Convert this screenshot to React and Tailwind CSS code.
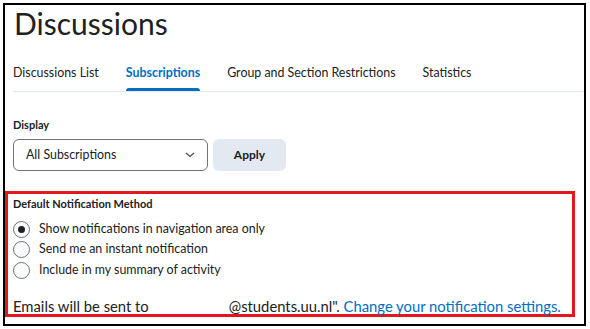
import React from "react";

function Radio({ checked, label }) {
  return (
    <div className="flex items-center h-[20.5px]">
      <span className="w-[17px] h-[17px] rounded-full border border-[#6e7477] bg-[#f9fbff] flex items-center justify-center">
        {checked && <span className="w-[7px] h-[7px] rounded-full bg-[#202122]" />}
      </span>
      <span className="ml-[9px] text-[12.4px] text-[#202122]">{label}</span>
    </div>
  );
}

export default function App() {
  const tabs = ["Discussions List", "Subscriptions", "Group and Section Restrictions", "Statistics"];

  return (
    <div
      className="w-[590px] h-[329px] bg-white p-[3px]"
      style={{ fontFamily: "Lato, 'Noto Sans', sans-serif" }}
    >
      <div className="h-[323px] w-[583px] border-2 border-black flex flex-col">
        <h1 className="pl-[9px] text-[30px] leading-[37px] text-[#202122] font-normal">
          Discussions
        </h1>

        <div className="ml-[8px] mt-[17px] flex gap-[27px] border-b border-[#e3e9f1] h-[33px]">
          {tabs.map((t, i) => (
            <div
              key={t}
              className={
                "relative pt-[5px] text-[12.4px] " +
                (i === 1 ? "text-[#006fbf] font-bold" : "text-[#202122]")
              }
            >
              {t}
              {i === 1 && (
                <span className="absolute left-0 right-0 bottom-0 h-[3px] bg-[#006fbf] rounded-t-sm" />
              )}
            </div>
          ))}
        </div>

        <div className="pl-[8px] mt-[26px]">
          <div className="text-[11px] font-bold text-[#202122] leading-[14px]">Display</div>
          <div className="flex gap-[5px] mt-[7px]">
            <div className="w-[195px] h-[32px] rounded-md border border-[#6e7477] flex items-center justify-between pl-[12px] pr-[12px]">
              <span className="text-[12.4px] text-[#202122]">All Subscriptions</span>
              <svg width="10" height="6" viewBox="0 0 10 6" fill="none">
                <path d="M1 1l4 3.5L9 1" stroke="#494c4e" strokeWidth="1.3" />
              </svg>
            </div>
            <button className="w-[73px] h-[32px] rounded-md bg-[#e3e9f1] text-[12px] font-bold text-[#202122]">
              Apply
            </button>
          </div>
        </div>

        <div className="mt-[20px] w-[570px] h-[126px] border-[3px] border-[#e3171f] pl-[5px]">
          <div className="mt-[3px] text-[11px] font-bold text-[#202122] leading-[14px]">
            Default Notification Method
          </div>
          <div className="mt-[8px] flex flex-col">
            <Radio checked label="Show notifications in navigation area only" />
            <Radio label="Send me an instant notification" />
            <Radio label="Include in my summary of activity" />
          </div>
          <div className="mt-[16px] text-[14.8px] text-[#202122] leading-[18px] whitespace-nowrap">
            Emails will be sent to
            <span className="inline-block w-[80px]" />
            @students.uu.nl".{" "}
            <span className="text-[#006fbf]">Change your notification settings.</span>
          </div>
        </div>
      </div>
    </div>
  );
}
